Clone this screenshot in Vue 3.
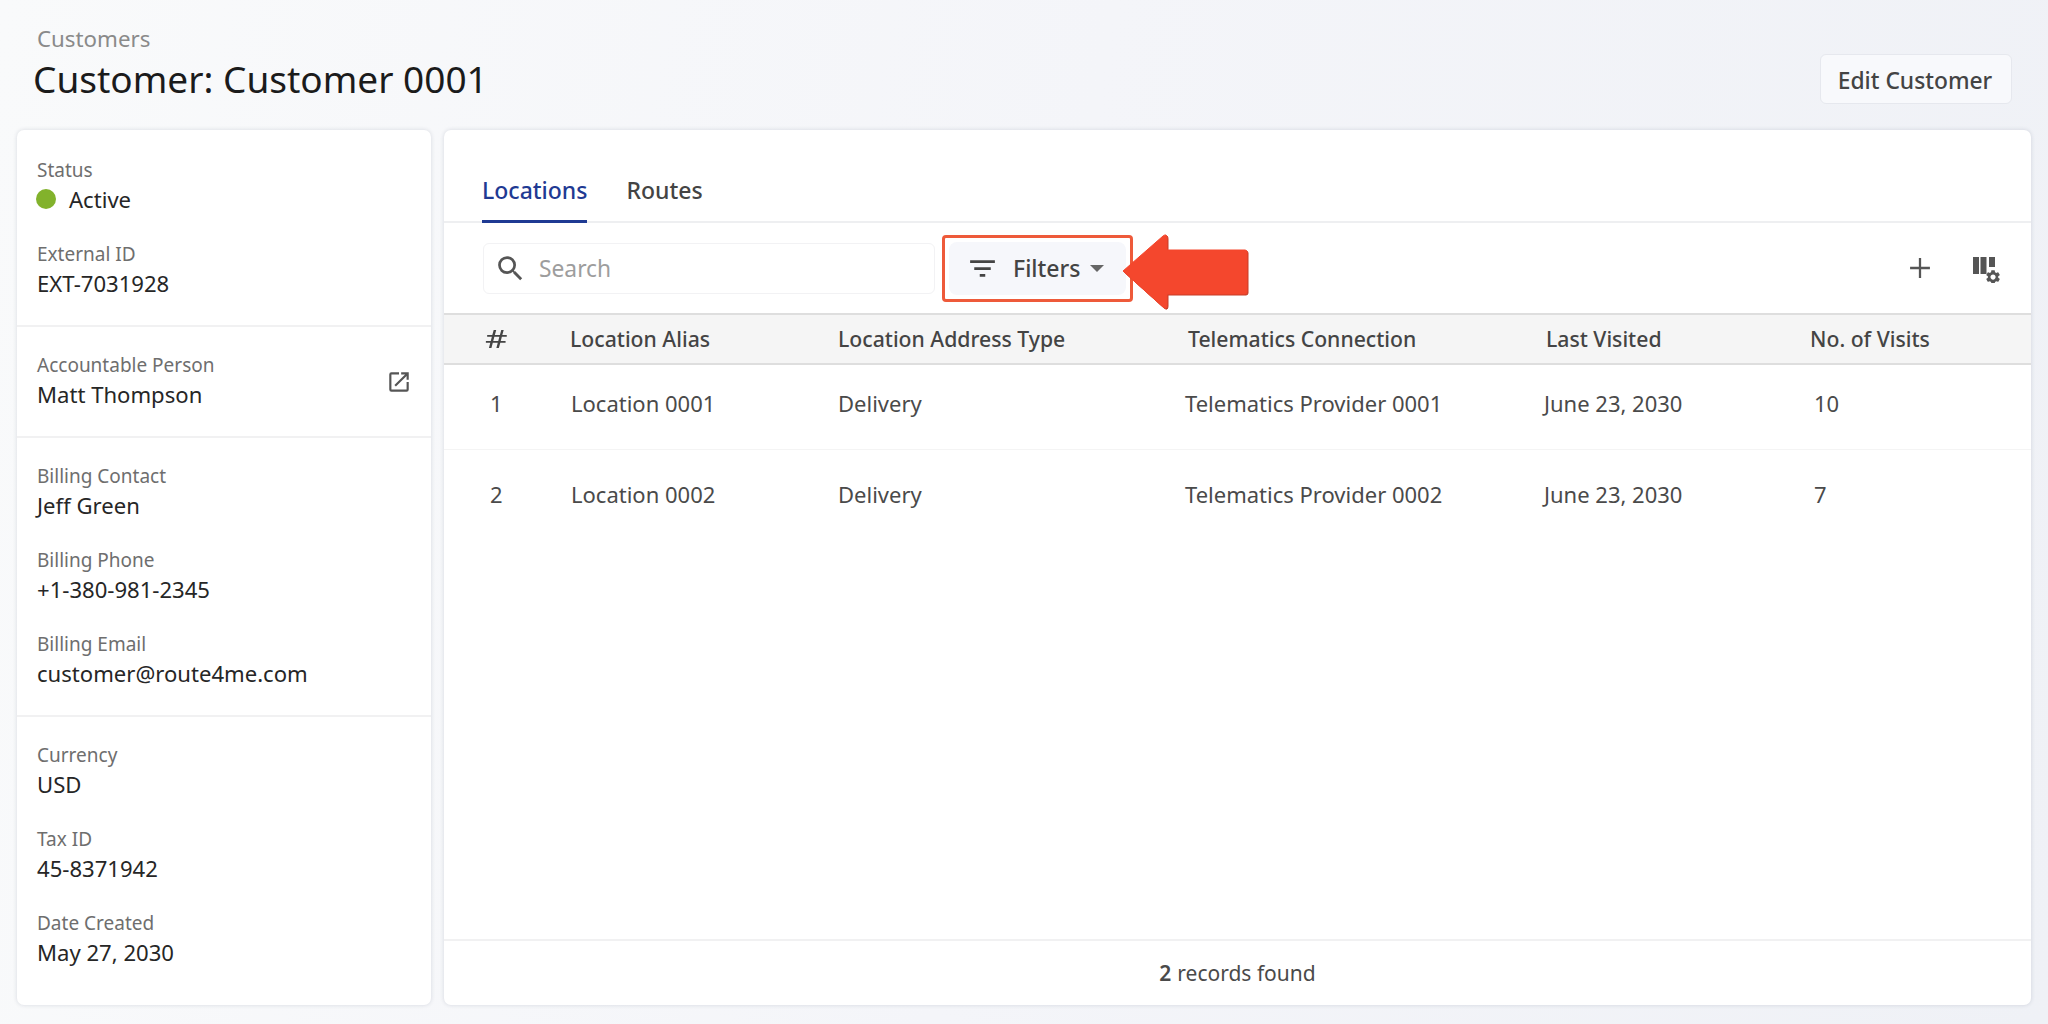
<script setup>
const sections = [
  [
    { label: 'Status', value: 'Active', status: true },
    { label: 'External ID', value: 'EXT-7031928' },
  ],
  [{ label: 'Accountable Person', value: 'Matt Thompson', link: true }],
  [
    { label: 'Billing Contact', value: 'Jeff Green' },
    { label: 'Billing Phone', value: '+1-380-981-2345' },
    { label: 'Billing Email', value: 'customer@route4me.com' },
  ],
  [
    { label: 'Currency', value: 'USD' },
    { label: 'Tax ID', value: '45-8371942' },
    { label: 'Date Created', value: 'May 27, 2030' },
  ],
]

const columns = ['#', 'Location Alias', 'Location Address Type', 'Telematics Connection', 'Last Visited', 'No. of Visits']

const rows = [
  ['1', 'Location 0001', 'Delivery', 'Telematics Provider 0001', 'June 23, 2030', '10'],
  ['2', 'Location 0002', 'Delivery', 'Telematics Provider 0002', 'June 23, 2030', '7'],
]
</script>

<template>
  <div class="page">
    <header class="page-head">
      <div>
        <div class="crumb">Customers</div>
        <h1 class="title">Customer: Customer 0001</h1>
      </div>
      <button class="edit-btn">Edit Customer</button>
    </header>

    <main class="content">
      <aside class="card side">
        <section v-for="(section, i) in sections" :key="i" class="side-section">
          <div v-for="item in section" :key="item.label" class="field">
            <div class="field-label">{{ item.label }}</div>
            <div class="field-value">
              <span v-if="item.status" class="dot"></span>
              <span>{{ item.value }}</span>
              <svg v-if="item.link" class="ext-link" viewBox="0 0 24 24">
                <path d="M19 19H5V5h7V3H5a2 2 0 0 0-2 2v14a2 2 0 0 0 2 2h14a2 2 0 0 0 2-2v-7h-2v7zM14 3v2h3.59l-9.83 9.83 1.41 1.41L19 6.41V10h2V3h-7z" />
              </svg>
            </div>
          </div>
        </section>
      </aside>

      <section class="card main-card">
        <nav class="tabs">
          <a class="tab active">Locations</a>
          <a class="tab">Routes</a>
        </nav>

        <div class="toolbar">
          <div class="search">
            <svg class="search-icon" viewBox="0 0 24 24">
              <path d="M15.5 14h-.79l-.28-.27A6.47 6.47 0 0 0 16 9.5 6.5 6.5 0 1 0 9.5 16c1.61 0 3.09-.59 4.23-1.57l.27.28v.79l5 4.99L20.49 19l-4.99-5zm-6 0C7.01 14 5 11.99 5 9.5S7.01 5 9.5 5 14 7.01 14 9.5 11.99 14 9.5 14z" />
            </svg>
            <span class="placeholder">Search</span>
          </div>
          <div class="filters-wrap">
            <button class="filters">
              <svg class="filter-icon" viewBox="0 0 24 24">
                <path d="M10 18h4v-2h-4v2zM3 6v2h18V6H3zm3 7h12v-2H6v2z" />
              </svg>
              <span>Filters</span>
              <i class="caret"></i>
            </button>
            <svg class="arrow" viewBox="0 0 128 76">
              <path d="M1 37 L41 2 Q45 -1 45 4 L45 16 L123 16 Q125 16 125 18 L125 58 Q125 60 123 60 L45 60 L45 71 Q45 76 41 73 Z" />
            </svg>
          </div>
          <div class="tool-icons">
            <svg class="plus" viewBox="0 0 24 24"><path d="M19 12.8h-6.2V19h-1.6v-6.2H5v-1.6h6.2V5h1.6v6.2H19v1.6z" /></svg>
            <svg class="cols" viewBox="0 0 27 26">
              <path d="M0 0h6v17H0zM7.5 0h6v17h-6zM16 0h6v10h-6z" />
              <path transform="translate(11.4 11.4) scale(.72)" d="M19.14 12.94c.04-.3.06-.61.06-.94 0-.32-.02-.64-.07-.94l2.03-1.58a.49.49 0 0 0 .12-.61l-1.92-3.32a.488.488 0 0 0-.59-.22l-2.39.96c-.5-.38-1.03-.7-1.62-.94l-.36-2.54a.484.484 0 0 0-.48-.41h-3.84c-.24 0-.43.17-.47.41l-.36 2.54c-.59.24-1.13.57-1.62.94l-2.39-.96c-.22-.08-.47 0-.59.22L2.74 8.87c-.12.21-.08.47.12.61l2.03 1.58c-.05.3-.09.63-.09.94s.02.64.07.94l-2.03 1.58a.49.49 0 0 0-.12.61l1.92 3.32c.12.22.37.29.59.22l2.39-.96c.5.38 1.03.7 1.62.94l.36 2.54c.05.24.24.41.48.41h3.84c.24 0 .44-.17.47-.41l.36-2.54c.59-.24 1.13-.56 1.62-.94l2.39.96c.22.08.47 0 .59-.22l1.92-3.32c.12-.22.07-.47-.12-.61l-2.01-1.58zM12 15.6c-1.98 0-3.6-1.62-3.6-3.6s1.62-3.6 3.6-3.6 3.6 1.62 3.6 3.6-1.62 3.6-3.6 3.6z" />
            </svg>
          </div>
        </div>

        <div class="table">
          <div class="t-head">
            <div v-for="(col, i) in columns" :key="col" class="th" :class="{ hash: i === 0 }">{{ col }}</div>
          </div>
          <div v-for="row in rows" :key="row[0]" class="t-row">
            <div v-for="(cell, i) in row" :key="i" class="td" :class="{ num: i === 0 }">{{ cell }}</div>
          </div>
        </div>

        <footer class="records"><b>2</b> records found</footer>
      </section>
    </main>
  </div>
</template>

<style scoped>
.page {
  width: 2048px;
  height: 1024px;
  box-sizing: border-box;
  padding: 0 17px;
  background: linear-gradient(100deg, #f9fafb 0%, #f4f5f9 50%, #eff1f6 100%);
  font-family: "Noto Sans", "Open Sans", sans-serif;
  color: #222;
  overflow: hidden;
}
.page-head {
  height: 130px;
  display: flex;
  justify-content: space-between;
  align-items: flex-start;
  padding-right: 19px;
}
.crumb {
  margin: 25px 0 0 20px;
  font-size: 22.3px;
  line-height: 28px;
  color: #8a8a8a;
}
.title {
  margin: 1px 0 0 16px;
  font-size: 37px;
  line-height: 50px;
  font-weight: 400;
  color: #1b1b1b;
}
.edit-btn {
  margin-top: 54px;
  width: 192px;
  height: 50px;
  border: 1px solid #e6e8ee;
  border-radius: 6px;
  background: #f8f9fc;
  font: 500 22.8px "Noto Sans", sans-serif;
  color: #444;
  padding: 2px 2px 0 0;
}
.content {
  display: flex;
  gap: 13px;
  height: 875px;
}
.card {
  background: #fff;
  border-radius: 7px;
  box-shadow: 0 0 4px rgba(40, 50, 80, 0.16);
}
.side {
  width: 414px;
  flex: none;
}
.side-section {
  display: flex;
  flex-direction: column;
  gap: 26px;
  padding: 24px 20px 27px;
  border-bottom: 2px solid #f1f1f2;
}
.side-section:first-child {
  padding-top: 26px;
}
.side-section:last-child {
  border-bottom: 0;
}
.field-label {
  font-size: 19px;
  line-height: 28px;
  color: #6e6e6e;
}
.field-value {
  display: flex;
  align-items: center;
  font-size: 22.1px;
  line-height: 30px;
  color: #262626;
}
.dot {
  width: 20px;
  height: 20px;
  border-radius: 50%;
  background: #82b22c;
  margin: 0 13px 0 -1px;
}
.ext-link {
  width: 26px;
  height: 26px;
  margin-left: auto;
  margin-right: -1px;
  margin-top: -25px;
  fill: #555;
}
.main-card {
  flex: 1;
  display: flex;
  flex-direction: column;
}
.tabs {
  height: 93px;
  box-sizing: border-box;
  display: flex;
  align-items: flex-end;
  gap: 39px;
  padding-left: 38px;
  border-bottom: 2px solid #eeeff1;
}
.tab {
  font-size: 23px;
  font-weight: 500;
  line-height: 32px;
  padding-bottom: 14px;
  margin-bottom: -2px;
  border-bottom: 3px solid transparent;
  color: #444;
}
.tab.active {
  color: #1f3a93;
  border-bottom-color: #1f3a93;
}
.toolbar {
  height: 90px;
  flex: none;
  display: flex;
  align-items: center;
  padding-left: 39px;
  box-sizing: border-box;
}
.search {
  width: 452px;
  height: 51px;
  box-sizing: border-box;
  border: 1px solid #f2f2f4;
  border-radius: 6px;
  display: flex;
  align-items: center;
  padding-left: 10px;
}
.search-icon {
  width: 33px;
  height: 33px;
  fill: #555;
}
.placeholder {
  margin-left: 12px;
  font-size: 22.8px;
  color: #9d9d9d;
}
.filters-wrap {
  position: relative;
  margin-left: 7px;
  width: 191px;
  height: 67px;
  box-sizing: border-box;
  padding: 4px;
  border: 3px solid #ee5a3a;
  border-radius: 4px;
}
.filters {
  width: 100%;
  height: 100%;
  display: flex;
  align-items: center;
  gap: 14px;
  padding: 0 0 0 17px;
  border: 0;
  border-radius: 8px;
  background: #f6f7fb;
  font: 500 23px "Noto Sans", sans-serif;
  color: #444;
}
.filter-icon {
  width: 33px;
  height: 33px;
  fill: #444;
}
.caret {
  margin-left: -4px;
  border-left: 7px solid transparent;
  border-right: 7px solid transparent;
  border-top: 7px solid #666;
}
.arrow {
  position: absolute;
  left: 177px;
  top: -4px;
  width: 128px;
  height: 76px;
  fill: #f4472d;
  stroke: #f4472d;
  stroke-width: 1;
  filter: drop-shadow(1px 1px 0 #c63c28);
}
.tool-icons {
  margin-left: auto;
  display: flex;
  align-items: center;
  gap: 36px;
  padding-right: 31px;
}
.plus {
  width: 34px;
  height: 34px;
  fill: #555;
}
.cols {
  width: 27px;
  height: 26px;
  margin-top: 4px;
  fill: #555;
}
.table {
  flex: 1;
  border-top: 2px solid #dedede;
}
.t-head,
.t-row {
  display: grid;
  grid-template-columns: 126px 268px 350px 358px 264px 1fr;
  align-items: center;
}
.t-head {
  padding-bottom: 2px;
  height: 46px;
  background: #f5f5f5;
  border-bottom: 2px solid #dedede;
}
.th {
  font-size: 21.2px;
  font-weight: 500;
  color: #444;
}
.hash {
  font-size: 26px;
  font-weight: 400;
  padding-left: 41px;
  transform: scaleX(1.35);
  transform-origin: 41px 50%;
}
.t-row {
  height: 85px;
  box-sizing: border-box;
  padding-bottom: 8px;
  border-bottom: 1px solid #f4f4f4;
}
.t-row:last-child {
  height: 92px;
  padding-bottom: 4px;
  border-bottom: 0;
}
.td {
  font-size: 22px;
  color: #4a4a4a;
}
.td:nth-child(2) { margin-left: 1px; }
.td:nth-child(4) { margin-left: -3px; }
.td:nth-child(5) { margin-left: -2px; }
.td:nth-child(6) { margin-left: 4px; }
.num {
  padding-left: 46px;
}
.records {
  height: 66px;
  flex: none;
  box-sizing: border-box;
  display: flex;
  align-items: center;
  justify-content: center;
  gap: 6px;
  border-top: 2px solid #f1f1f2;
  font-size: 21px;
  color: #4a4a4a;
}
.records b {
  font-weight: 600;
}
</style>

<style>
html, body {
  margin: 0;
  background: #f4f5f9;
}
</style>
